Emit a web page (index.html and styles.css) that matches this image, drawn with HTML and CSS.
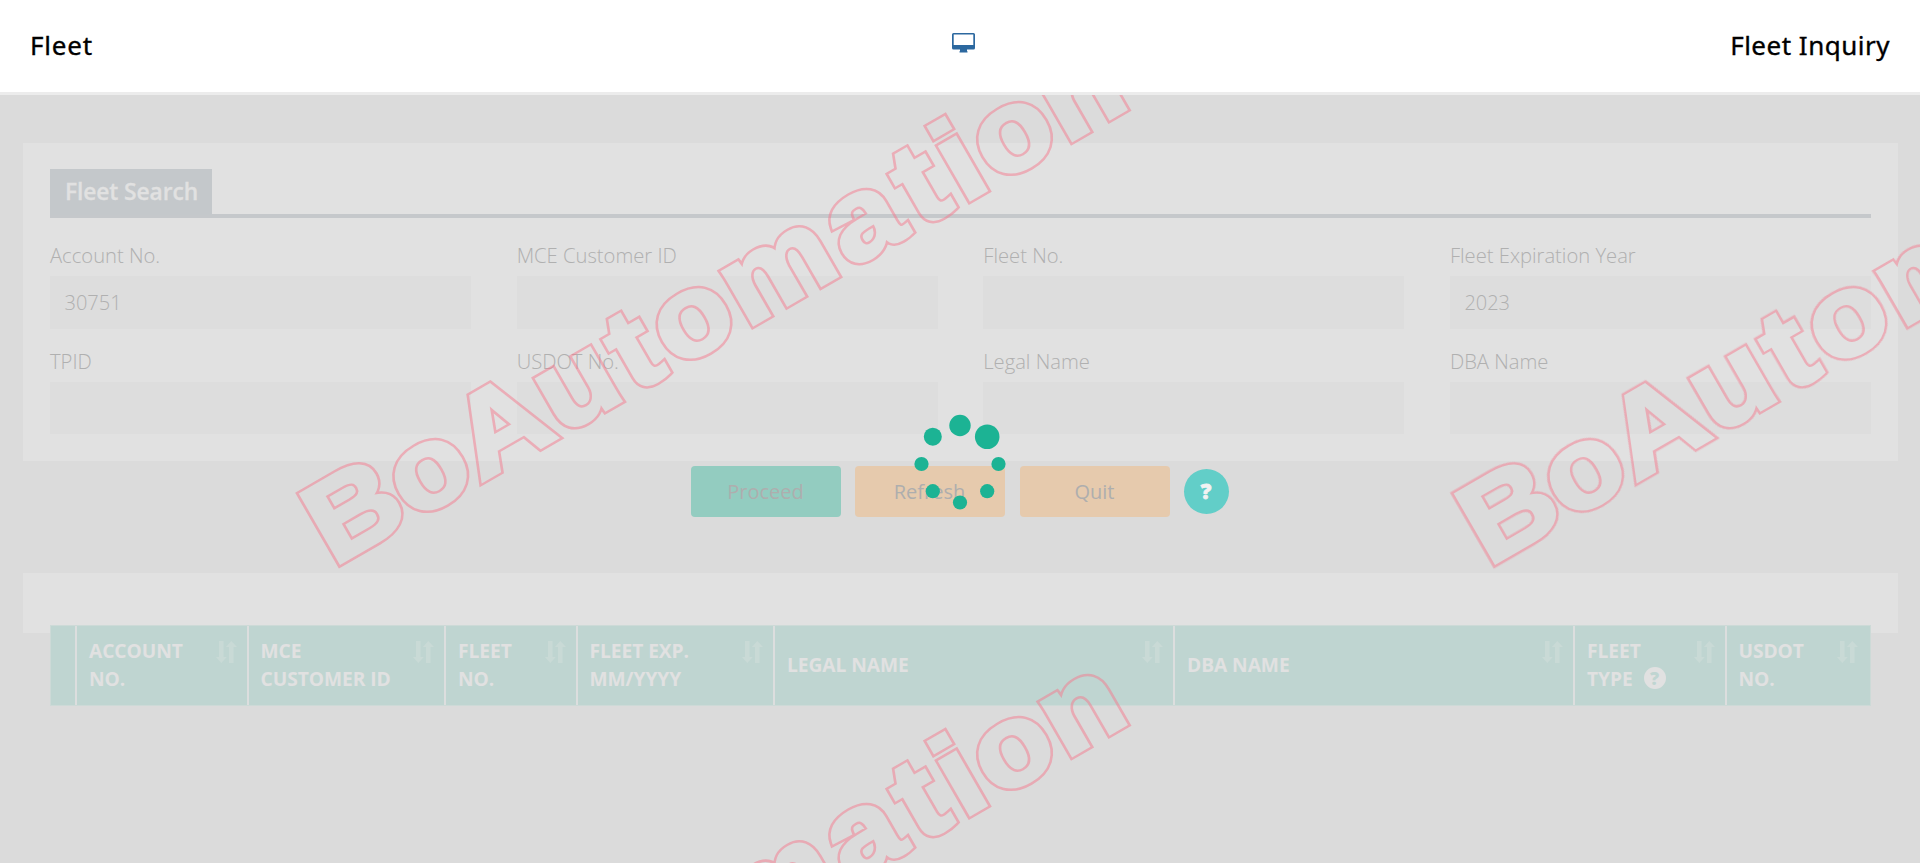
FILE: index.html
```html
<!DOCTYPE html>
<html lang="en">
<head>
<meta charset="utf-8">
<title>Fleet Inquiry</title>
<link rel="stylesheet" href="styles.css">
</head>
<body>
<svg width="0" height="0" class="defs" aria-hidden="true">
  <symbol id="sort" viewBox="0 0 21 22">
    <path d="M3 0h4.600V16h3.200L5.300 22L0 16h3zM13 22h4.600V6H21L15.300 0L9.900 6H13z"/>
  </symbol>
</svg>
<header class="topbar">
  <div class="topbar-title">Fleet</div>
  <svg class="monitor" viewBox="0 0 23 20"><path fill-rule="evenodd" d="M1.500 0h20A1.500 1.500 0 0 1 23 1.500v13.500a1.500 1.500 0 0 1-1.500 1.500H15v1.500l.5.500v1h-8v-1l.5-.5v-1.500H1.500A1.500 1.500 0 0 1 0 15V1.500A1.500 1.500 0 0 1 1.500 0zM1.700 1.600V12h19.600V1.600z"/></svg>
  <div class="topbar-title topbar-page">Fleet Inquiry</div>
</header>
<main class="page">
  <section class="card search">
    <div class="tab-row"><h2 class="tab">Fleet Search</h2></div>
    <div class="fields">
      <label class="field"><span class="label">Account No.</span><span class="input">30751</span></label>
      <label class="field"><span class="label">MCE Customer ID</span><span class="input"></span></label>
      <label class="field"><span class="label">Fleet No.</span><span class="input"></span></label>
      <label class="field"><span class="label">Fleet Expiration Year</span><span class="input">2023</span></label>
      <label class="field"><span class="label">TPID</span><span class="input input-short"></span></label>
      <label class="field"><span class="label">USDOT No.</span><span class="input input-short"></span></label>
      <label class="field"><span class="label">Legal Name</span><span class="input input-short"></span></label>
      <label class="field"><span class="label">DBA Name</span><span class="input input-short"></span></label>
    </div>
  </section>
  <div class="actions">
    <div class="btn btn-go">Proceed</div>
    <div class="btn">Refresh</div>
    <div class="btn btn-quit">Quit</div>
    <div class="help">?</div>
  </div>
  <section class="card results">
    <div class="thead">
      <div class="th"></div>
      <div class="th"><span>ACCOUNT<br>NO.</span><svg class="sort"><use href="#sort"/></svg></div>
      <div class="th"><span>MCE<br>CUSTOMER ID</span><svg class="sort"><use href="#sort"/></svg></div>
      <div class="th"><span>FLEET<br>NO.</span><svg class="sort"><use href="#sort"/></svg></div>
      <div class="th"><span>FLEET EXP.<br>MM/YYYY</span><svg class="sort"><use href="#sort"/></svg></div>
      <div class="th"><span>LEGAL NAME</span><svg class="sort"><use href="#sort"/></svg></div>
      <div class="th"><span>DBA NAME</span><svg class="sort"><use href="#sort"/></svg></div>
      <div class="th"><span>FLEET<br>TYPE <i class="info">?</i></span><svg class="sort"><use href="#sort"/></svg></div>
      <div class="th"><span>USDOT<br>NO.</span><svg class="sort"><use href="#sort"/></svg></div>
    </div>
  </section>
</main>
<svg class="watermark" viewBox="0 95 1920 768" aria-hidden="true">
  <defs>
    <text id="word" class="word" y="-3" x="46.200 122.800 200.600 278.500 339 399 489 579 639.500 681.500 735.500 808">BoAutomation</text>
    <g id="tiles">
      <use href="#word" transform="translate(330.500 572) rotate(-30) scale(1.1 1)"/>
      <use href="#word" transform="translate(1485.500 572) rotate(-30) scale(1.1 1)"/>
      <use href="#word" transform="translate(330.500 1187) rotate(-30) scale(1.1 1)"/>
    </g>
    <mask id="hollow" maskUnits="userSpaceOnUse" x="0" y="0" width="1920" height="900">
      <rect width="1920" height="900" fill="#fff"/>
      <use href="#tiles" class="inner"/>
    </mask>
  </defs>
  <g mask="url(#hollow)" opacity="0.5"><use href="#tiles" class="outer"/></g>
</svg>
<svg class="spinner" viewBox="0 0 100 100">
  <circle cx="50" cy="11.500" r="10.700"/>
  <circle cx="77.200" cy="22.700" r="12.300"/>
  <circle cx="88.500" cy="50" r="7.100"/>
  <circle cx="77.200" cy="77.200" r="7.100"/>
  <circle cx="50" cy="88.500" r="7.100"/>
  <circle cx="22.800" cy="77.200" r="7.100"/>
  <circle cx="11.500" cy="50" r="7.100"/>
  <circle cx="22.800" cy="22.700" r="9"/>
</svg>
</body>
</html>
```
FILE: styles.css
```css
* { box-sizing: border-box; }
body {
  margin: 0;
  height: 863px;
  overflow: hidden;
  position: relative;
  background: #dbdbdb;
  font-family: "Open Sans", "Noto Sans", sans-serif;
}
.defs { position: absolute; }
.topbar {
  height: 95px;
  padding: 0 30px 2px;
  display: grid;
  grid-template-columns: 1fr 23px 1fr;
  align-items: center;
  background: #fff;
  border-bottom: 3px solid #ececec;
}
.topbar-title {
  font: 400 26px/36px "Noto Sans", sans-serif;
  -webkit-text-stroke: 0.350px #000;
  letter-spacing: 0.8px;
  color: #000;
}
.topbar-page { text-align: right; letter-spacing: 0.5px; }
.monitor { width: 23px; height: 20px; margin: -5px 0 0 3px; fill: #2c689f; }
.page { padding: 48px 22px 0 23px; }
.card { background: #e1e1e1; }
.search { height: 318px; padding: 26px 27px 0; }
.tab-row { height: 49px; border-bottom: 4px solid #c5c8cb; }
.tab {
  width: 162px;
  height: 46px;
  margin: 0;
  padding-left: 15px;
  background: #c4c8cb;
  color: #e1e1e1;
  font-size: 22.800px;
  line-height: 46px;
  font-weight: 600;
  -webkit-text-stroke: 0.300px #e1e1e1;
  letter-spacing: -0.1px;
  white-space: nowrap;
}
.fields {
  display: grid;
  grid-template-columns: repeat(4, 1fr);
  column-gap: 45.500px;
  row-gap: 13px;
  padding-top: 18px;
}
.field { display: block; }
.label, .input { display: block; font-weight: 300; font-size: 20.200px; color: #b0b0b0; }
.label { height: 40px; line-height: 38px; }
.input { height: 53px; line-height: 54px; padding-left: 14.500px; background: #dddddd; font-size: 20px; }
.input-short { height: 52px; }
.actions { display: flex; justify-content: center; padding: 5px 2px 0 0; height: 112px; }
.btn {
  width: 150px;
  height: 51px;
  margin-right: 14px;
  border-radius: 4px;
  background: #e6caad;
  color: #aeaeae;
  font-size: 20px;
  font-weight: 400;
  line-height: 51px;
  text-align: center;
}
.btn-go { background: #93ccc0; }
.btn-quit { margin-left: 1px; }
.help {
  width: 45px;
  height: 45px;
  margin-top: 3px;
  border-radius: 50%;
  background: #62cec8;
  color: #f2f2f2;
  font-size: 21px;
  font-weight: 800;
  -webkit-text-stroke: 0.800px #f2f2f2;
  line-height: 45px;
  text-align: center;
}
.results { height: 60px; padding: 52px 27px 0; }
.thead {
  display: grid;
  grid-template-columns: 26px 171.500px 197.500px 131.500px 197.500px 400px 400px 151.500px 1fr;
  height: 81px;
  border: 1px solid #cddad7;
}
.th {
  display: flex;
  justify-content: space-between;
  align-items: center;
  padding: 0 12px 1px;
  background: #bfd5d1;
  border-right: 2px solid #dcdede;
  color: #e1e1e1;
  font-size: 19.200px;
  line-height: 28px;
  font-weight: 700;
  letter-spacing: -0.05px;
}
.th:last-child { border-right: 0; }
.th:last-child .sort { margin-right: 0; }
.th span { white-space: nowrap; }
.sort { width: 21px; height: 22px; align-self: flex-start; margin: 15px -2px 0 0; flex: none; fill: #c9dad6; }
.info {
  display: inline-block;
  width: 22px;
  height: 22px;
  margin-left: 6px;
  border-radius: 50%;
  background: #e1e1e1;
  color: #bfd5d1;
  font: 800 18px/22px "Open Sans", sans-serif;
  text-align: center;
  vertical-align: 1px;
}
.watermark { position: absolute; left: 0; top: 95px; width: 1920px; height: 768px; }
.word { font: 700 115px "Liberation Sans", Arial, sans-serif; text-anchor: middle; }
.inner { fill: #000; stroke: #000; stroke-width: 3.600px; }
.outer { fill: #f4788c; stroke: #f4788c; stroke-width: 8.400px; }
.spinner { position: absolute; left: 910px; top: 414px; width: 100px; height: 100px; fill: #1cb394; }
```
